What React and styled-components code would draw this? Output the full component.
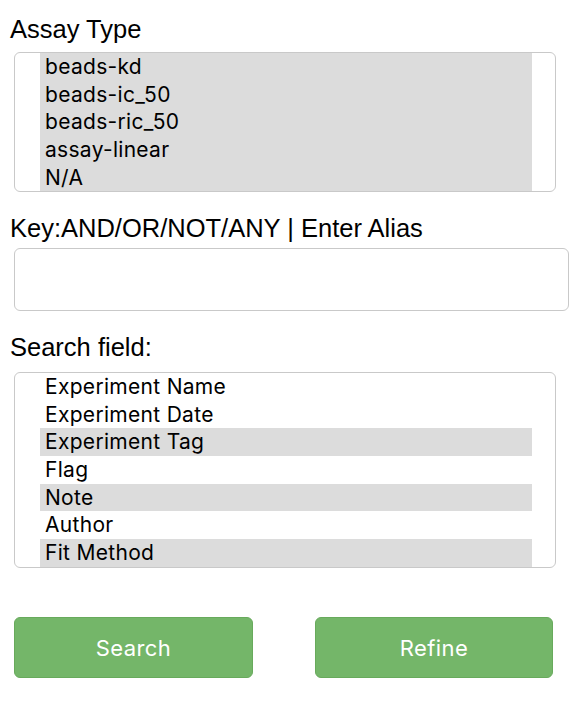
import styled, { createGlobalStyle } from "styled-components";

const GlobalStyle = createGlobalStyle`
  body {
    margin: 0;
    background: #fff;
    font-family: "Liberation Sans", Arial, sans-serif;
    color: #000;
  }
`;

const Page = styled.div`
  padding: 15px 10px 30px 10px;
  width: 580px;
  box-sizing: border-box;
`;

const Label = styled.div`
  font-family: "Liberation Sans", Arial, sans-serif;
  font-size: 25.5px;
  line-height: 28px;
  white-space: nowrap;
  margin-top: ${(p) => p.$top || 0}px;
  margin-bottom: ${(p) => p.$bottom || 0}px;
`;

const ListBox = styled.div`
  margin-left: 4px;
  width: 542px;
  height: ${(p) => p.$height}px;
  box-sizing: border-box;
  border: 1px solid #c9c9c9;
  border-radius: 6px;
  padding: 0 23px 0 25px;
  overflow: hidden;
`;

const Option = styled.div`
  height: 27.7px;
  line-height: 27.7px;
  padding-left: 5px;
  font-family: Inter, "Liberation Sans", sans-serif;
  font-size: 21px;
  letter-spacing: 0.3px;
  white-space: nowrap;
  background: ${(p) => (p.$selected ? "#dcdcdc" : "transparent")};
`;

const TextInput = styled.input`
  display: block;
  margin-left: 4px;
  width: 555px;
  height: 63px;
  box-sizing: border-box;
  border: 1px solid #c9c9c9;
  border-radius: 6px;
  outline: none;
  padding: 0 10px;
  font-size: 20px;
`;

const ButtonRow = styled.div`
  display: flex;
  gap: 62px;
  margin: 49px 0 0 4px;
`;

const Button = styled.button`
  width: ${(p) => p.$width}px;
  height: 61px;
  box-sizing: border-box;
  border: 1px solid #68aa5c;
  border-radius: 6px;
  background: #74b669;
  color: #fff;
  font-family: Inter, "Liberation Sans", sans-serif;
  font-size: 22px;
  letter-spacing: 0.4px;
  cursor: pointer;
`;

const assayTypes = ["beads-kd", "beads-ic_50", "beads-ric_50", "assay-linear", "N/A"];

const searchFields = [
  { name: "Experiment Name", selected: false },
  { name: "Experiment Date", selected: false },
  { name: "Experiment Tag", selected: true },
  { name: "Flag", selected: false },
  { name: "Note", selected: true },
  { name: "Author", selected: false },
  { name: "Fit Method", selected: true },
];

const App = () => {
  return (
    <Page>
      <GlobalStyle />
      <Label $bottom={9}>Assay Type</Label>
      <ListBox $height={140}>
        {assayTypes.map((type) => (
          <Option $selected key={type}>
            {type}
          </Option>
        ))}
      </ListBox>

      <Label $top={22} $bottom={6}>
        Key:AND/OR/NOT/ANY | Enter Alias
      </Label>
      <TextInput type="text" />

      <Label $top={22} $bottom={11}>
        Search field:
      </Label>
      <ListBox $height={196}>
        {searchFields.map((field) => (
          <Option $selected={field.selected} key={field.name}>
            {field.name}
          </Option>
        ))}
      </ListBox>

      <ButtonRow>
        <Button $width={239}>Search</Button>
        <Button $width={238}>Refine</Button>
      </ButtonRow>
    </Page>
  );
};

export default App;
